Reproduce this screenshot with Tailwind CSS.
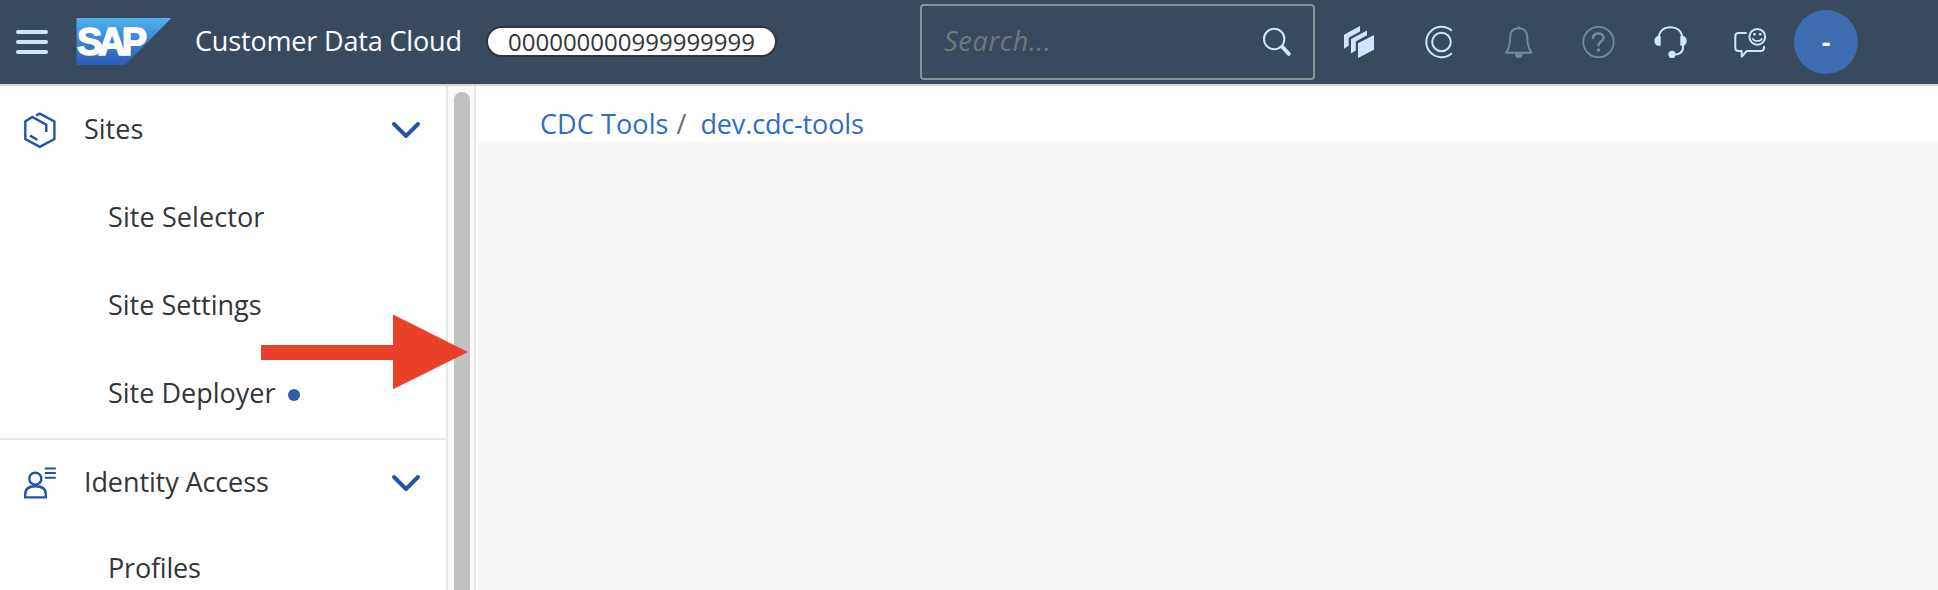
<!DOCTYPE html>
<html lang="en">
<head>
<meta charset="utf-8">
<title>Customer Data Cloud</title>
<script src="https://cdn.jsdelivr.net/npm/@tailwindcss/browser@4"></script>
</head>
<body class="relative flex h-[590px] w-[1938px] flex-col overflow-hidden bg-white font-['Open_Sans',sans-serif] text-[27px] leading-[36px] text-[#32363a]">
<header class="flex h-[86px] shrink-0 items-center border-b-2 border-[#d9d9d9] bg-[#394a5f] pl-4 text-white">
  <button class="flex w-8 flex-col gap-1.5" aria-label="Menu">
    <span class="h-1 rounded-full bg-[#d1e4ff]"></span><span class="h-1 rounded-full bg-[#d1e4ff]"></span><span class="h-1 rounded-full bg-[#d1e4ff]"></span>
  </button>
  <svg class="ml-7 h-[84px] w-[96px] shrink-0" viewBox="76 0 96 84">
    <defs><linearGradient id="sap" x1="0" y1="0" x2="0" y2="1"><stop offset="0" stop-color="#4fb3ec"/><stop offset=".5" stop-color="#3982d0"/><stop offset="1" stop-color="#2e5cb8"/></linearGradient></defs>
    <path d="M76.5 18H171.5L125 65H76.5z" fill="url(#sap)"/>
    <text x="77" y="55.3" font-family="Liberation Sans" font-weight="700" font-size="38" textLength="70" lengthAdjust="spacing" fill="#fff" stroke="#fff" stroke-width="1.5">SAP</text>
  </svg>
  <h1 class="ml-[23px] w-[291px] shrink-0 pb-[2px] tracking-[-0.16px] whitespace-nowrap">Customer Data Cloud</h1>
  <div class="mb-0.5 h-[31px] w-[291px] shrink-0 rounded-full border-2 border-[#32363a] bg-white pl-[20px] text-2xl leading-[27px] whitespace-nowrap text-[#32363a]">000000000999999999</div>
  <div class="ml-[143px] flex h-[76px] w-[395px] shrink-0 items-center justify-between rounded-[4px] border-2 border-[#899097] pl-[22px]">
    <span class="pb-[2px] tracking-[0.7px] text-[#74777a] italic">Search...</span>
    <svg class="mr-[14px] size-10" viewBox="1259 22 40 40" fill="none" stroke="#d1e4ff" stroke-linecap="round"><circle cx="1274.2" cy="39" r="10.2" stroke-width="2"/><path d="M1282.5 47l6.3 6.8" stroke-width="4"/></svg>
  </div>
  <svg class="ml-6 size-10 shrink-0" viewBox="1339 22 40 40" fill="#d1e4ff"><path d="M1344 34.7l16-8.7v5.5l-11.3 6.3v7.9l-4.7 3zM1351 38.9l16-8.4v4.7l-11.2 6.3v8.9l-4.8 3zM1358 43.3l16-8.3v14.7l-16 8.3z"/></svg>
  <svg class="ml-10 size-10 shrink-0" viewBox="1419 22 40 40" fill="none" stroke="#d1e4ff" stroke-width="2" stroke-linecap="round"><path d="M1451.2 30.300a15.200 15.200 0 1 0 0 23.400"/><circle cx="1441.500" cy="42" r="9.300"/></svg>
  <svg class="ml-10 size-10 shrink-0" viewBox="1499 22 40 40" fill="none" stroke="#7488a1" stroke-width="2" stroke-linejoin="round"><path d="M1518.5 28.2c-5.600 0-8.300 3.800-8.300 9.300 0 7.500-1.200 11-4.200 15.300h25.500c-3-4.300-4.200-7.800-4.200-15.300 0-5.500-3.200-9.300-8.800-9.300z"/><path d="M1515 54a3.800 4 0 0 0 7.600 0zM1517 28a1.700 1.700 0 0 1 3.400 0z" fill="#7488a1" stroke="none"/></svg>
  <svg class="ml-10 size-10 shrink-0" viewBox="1579 22 40 40" fill="none" stroke="#7488a1" stroke-linecap="round"><circle cx="1598.5" cy="42" r="15.200" stroke-width="1.800"/><path d="M1593 37.800c.200-3 2.400-4.300 5.300-4.300 3 0 5.300 1.600 5.300 4.300 0 3.600-5 3.800-5 7.400" stroke-width="2.500"/><circle cx="1598.500" cy="50" r="1.800" fill="#7488a1" stroke="none"/></svg>
  <svg class="ml-8 size-10 shrink-0" viewBox="1651 22 40 40" fill="none" stroke="#d1e4ff" stroke-width="2"><path d="M1658.500 37c1-6 5.500-9.800 12-9.800s11 3.800 12 9.800M1683.300 45c0 6-2.500 9.500-8 9.500"/><path d="M1660.700 36v9.700h-2c-2.500 0-4.300-2-4.300-4.800s1.800-4.900 4.300-4.900zM1680.300 36v9.700h2c2.500 0 4.400-2 4.400-4.800s-1.900-4.900-4.400-4.900z" fill="#d1e4ff" stroke="none"/><circle cx="1672" cy="54.400" r="3.600" fill="#d1e4ff" stroke="none"/></svg>
  <svg class="ml-[39px] size-10 shrink-0" viewBox="1730 22 40 40" fill="none" stroke="#d1e4ff" stroke-width="2" stroke-linecap="round" stroke-linejoin="round"><path d="M1746 33h-7.500q-3.200 0-3.200 3.200v11.600q0 3.200 3.200 3.200h3.200v5.600l5-5.600h14.100q3.200 0 3.200-3.200v-1"/><circle cx="1757.300" cy="36.800" r="7.900"/><path d="M1752.800 38.800c1.500 3 7.500 3 9 0" stroke-width="1.600"/><g fill="#d1e4ff" stroke="none"><circle cx="1754.400" cy="34.200" r="1.300"/><circle cx="1760.200" cy="34.200" r="1.300"/></g></svg>
  <div class="ml-6 flex size-16 shrink-0 items-center justify-center rounded-full bg-[#3d6db0] font-bold">-</div>
</header>

<div class="flex min-h-0 flex-1">
  <nav class="w-[446px] shrink-0">
    <div class="flex h-[88px] items-center pr-6 pb-px pl-[20px]">
      <svg class="size-10" viewBox="20 110 40 40" fill="none" stroke="#2455a4" stroke-width="2.400"><path d="M36 115.500l3.800-1.900 14.600 7.900v17.500l-14.600 7.800-14.500-7.800v-17.500l7-4.500 14 7.700v7.400M30 135.600l7.300 4.200"/></svg>
      <span class="ml-6 flex-1 pb-px">Sites</span>
      <svg class="h-6 w-8" viewBox="390 118 32 24" fill="none" stroke="#2455a4" stroke-width="4" stroke-linecap="round" stroke-linejoin="round"><path d="M394 124l12 12 12-12"/></svg>
    </div>
    <div class="flex h-[88px] items-center pb-[2px] pl-[108px] tracking-[0.1px]">Site Selector</div>
    <div class="flex h-[88px] items-center pb-[2px] pl-[108px]">Site Settings</div>
    <div class="flex h-[88px] items-center gap-[13px] pb-[2px] pl-[108px]">Site Deployer<span class="mt-[4px] size-3 rounded-full bg-[#2a5caa]"></span></div>
    <div class="flex h-[88px] items-center border-t-2 border-[#e4e4e4] pr-6 pb-px pl-[20px]">
      <svg class="size-10" viewBox="20 463 40 40" fill="none" stroke="#2455a4" stroke-width="2.400"><circle cx="35.300" cy="478.700" r="6"/><path d="M25.200 497.400v-3.200c0-5 3.500-8 10.300-8s10.300 3 10.300 8v3.200z"/><path d="M44.800 468.500h11M44.800 473h11M44.800 477.700h11" stroke-width="2"/></svg>
      <span class="ml-6 flex-1 pb-px tracking-[-0.1px]">Identity Access</span>
      <svg class="h-6 w-8" viewBox="390 118 32 24" fill="none" stroke="#2455a4" stroke-width="4" stroke-linecap="round" stroke-linejoin="round"><path d="M394 124l12 12 12-12"/></svg>
    </div>
    <div class="flex h-[88px] items-center pb-[4px] pl-[108px] tracking-[-0.2px]">Profiles</div>
  </nav>
  <div class="flex w-[30px] shrink-0 border-x-2 border-[#e7e7e7] bg-[#fafafa] pt-1.5 pl-1.5"><div class="w-4 rounded-t-full bg-[#c1c1c1]"></div></div>
  <main class="flex flex-1 flex-col">
    <div class="flex h-14 items-center pl-[64px] pt-[19px] whitespace-nowrap text-[#2f6bcb]"><a class="tracking-[0.1px]">CDC Tools</a><span class="ml-[8px] text-[#6a6d70]">/</span><a class="ml-[14px] tracking-[-0.15px]">dev.cdc-tools</a></div>
    <div class="ml-0.5 flex-1 bg-[#f7f7f7]"></div>
  </main>
</div>
<!-- pointer to the sidebar scrollbar -->
<svg class="absolute top-[314px] left-[261px] h-[76px] w-[208px]" viewBox="261 314 208 76"><path d="M261 345H393V314.500L468 352 393 389.300V360H261z" fill="#ea4027"/></svg>
</body>
</html>
